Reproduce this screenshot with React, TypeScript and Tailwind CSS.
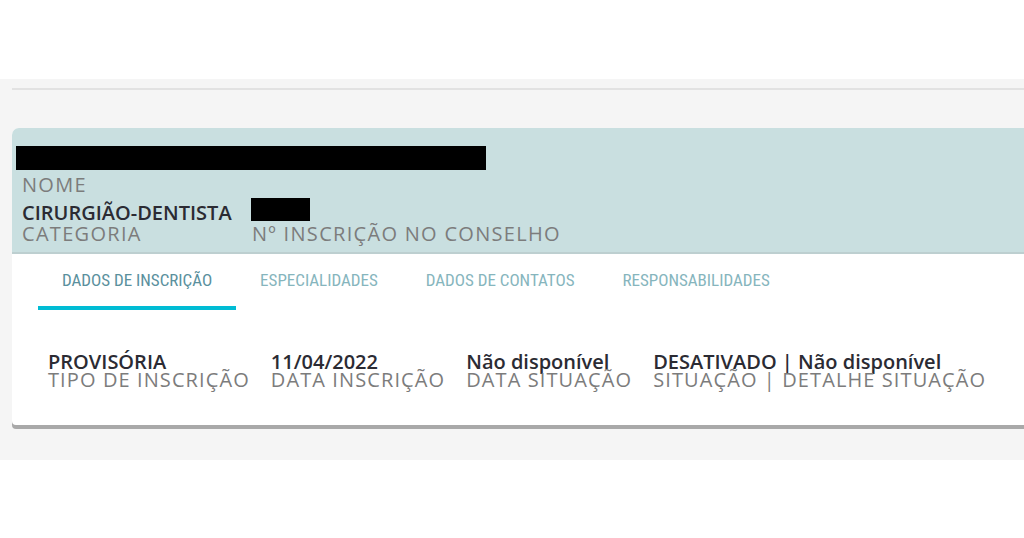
import React from 'react';

const tabs = ['DADOS DE INSCRIÇÃO', 'ESPECIALIDADES', 'DADOS DE CONTATOS', 'RESPONSABILIDADES'];

const fields = [
  { value: 'PROVISÓRIA', label: 'TIPO DE INSCRIÇÃO' },
  { value: '11/04/2022', label: 'DATA INSCRIÇÃO' },
  { value: 'Não disponível', label: 'DATA SITUAÇÃO' },
  { value: 'DESATIVADO | Não disponível', label: 'SITUAÇÃO | DETALHE SITUAÇÃO' },
];

const open = { fontFamily: '"Open Sans", "Noto Sans", sans-serif' };
const cond = { fontFamily: '"Roboto Condensed", "DejaVu Sans Condensed", Roboto, sans-serif' };

export default function App() {
  return (
    <div className="w-[1024px] h-[538px] bg-white overflow-hidden" style={open}>
      <div className="h-[79px]" />
      <div className="bg-[#f5f5f5] h-[381px] pl-[12px] pt-[9px]">
        <div className="h-[2px] bg-[#e2e2e2]" />
        <div className="mt-[38px] rounded-tl-[7px] rounded-bl-[4px] bg-white shadow-[0_4px_0_#a9a9a9]">
          <div className="h-[126px] bg-[#c9dfe0] rounded-tl-[7px] border-b-2 border-[#bdcfd0] pt-[18px] pl-[4px]">
            <div className="w-[470px] h-[24px] bg-black" />
            <div className="pl-[6px] mt-[4px] text-[20px] leading-[22px] tracking-[1.3px] text-[#7c7c7c]">NOME</div>
            <div className="flex items-end pl-[6px] mt-[2px]">
              <div className="w-[230px]">
                <div className="text-[20px] leading-[20px] font-semibold text-[#2b2b33]">CIRURGIÃO-DENTISTA</div>
                <div className="text-[20px] leading-[22px] tracking-[1.3px] text-[#7c7c7c]">CATEGORIA</div>
              </div>
              <div>
                <div className="w-[59px] h-[23px] bg-black ml-[-1px] mb-[2px]" />
                <div className="text-[20px] leading-[22px] tracking-[1.3px] text-[#7c7c7c]">Nº INSCRIÇÃO NO CONSELHO</div>
              </div>
            </div>
          </div>
          <div className="flex pl-[26px] h-[56px]" style={cond}>
            {tabs.map((t, i) => (
              <div
                key={t}
                className={`px-[24px] flex items-center pt-[2px] text-[17px] ${
                  i === 0 ? 'text-[#5a909d] border-b-4 border-[#00bcd4]' : 'text-[#86b5bd] border-b-4 border-transparent'
                }`}
              >
                {t}
              </div>
            ))}
          </div>
          <div className="flex gap-[21px] pl-[36px] pt-[42px] pb-[34px]">
            {fields.map((f) => (
              <div key={f.label}>
                <div className="text-[20px] leading-[20px] font-semibold text-[#2b2b33]">{f.value}</div>
                <div className="-mt-[3px] text-[20px] leading-[22px] tracking-[1.1px] text-[#7c7c7c]">{f.label}</div>
              </div>
            ))}
          </div>
        </div>
      </div>
    </div>
  );
}
